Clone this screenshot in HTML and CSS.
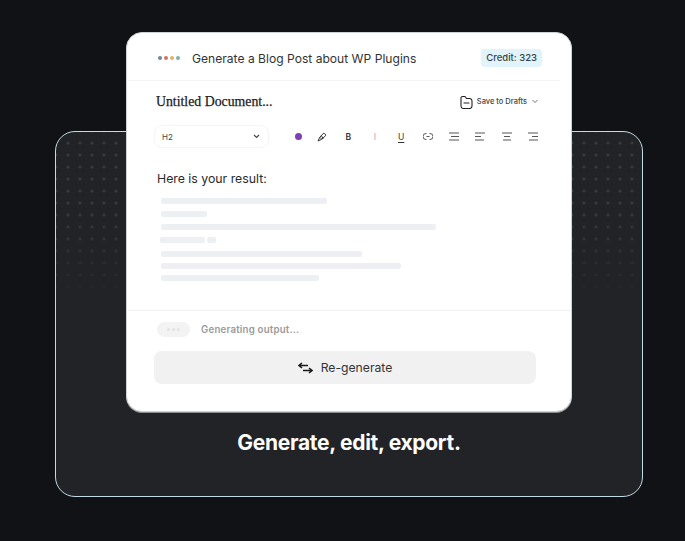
FILE: index.html
```html
<!DOCTYPE html>
<html lang="en">
<head>
<meta charset="utf-8">
<title>Generate, edit, export</title>
<link rel="stylesheet" href="styles.css">
</head>
<body>
<main class="stage">
  <section class="panel">
    <div class="dots"></div>
    <h2 class="caption">Generate, edit, export.</h2>
  </section>
  <article class="card">
    <header class="head">
      <div class="brand-dots"><i class="d1"></i><i class="d2"></i><i class="d3"></i><i class="d4"></i></div>
      <h1 class="title">Generate a Blog Post about WP Plugins</h1>
      <span class="credit">Credit: 323</span>
    </header>
    <div class="doc-row">
      <span class="doc-name">Untitled Document...</span>
      <div class="save">
        <svg class="folder" width="13" height="14" viewBox="0 0 13 14" fill="none" stroke="#222" stroke-width="1.100" stroke-linejoin="round" stroke-linecap="round"><path d="M1 3.500V3a1.500 1.500 0 0 1 1.500-1.500h2.500l1.500 2h3.500A2.500 2.500 0 0 1 12 6v5a2.500 2.500 0 0 1-2.500 2.500h-6A2.500 2.500 0 0 1 1 11z"/><path d="M4 8h5"/></svg>
        <span class="save-text">Save to Drafts</span>
        <svg width="6" height="5" viewBox="0 0 6 5" fill="none" stroke="#666" stroke-width="0.900"><path d="M.5 1L3 3.500 5.500 1"/></svg>
      </div>
    </div>
    <div class="toolbar">
      <div class="select"><span>H2</span>
        <svg width="7" height="5" viewBox="0 0 7 5" fill="none" stroke="#444" stroke-width="1.100"><path d="M1 1l2.500 2.500L6 1"/></svg>
      </div>
      <div class="tools">
        <span class="tool tool-swatch"><i class="swatch"></i></span>
        <span class="tool"><svg width="10" height="10" viewBox="0 0 10 10" fill="none" stroke="#222" stroke-width="0.900" stroke-linejoin="round"><path d="M2.800 5.200L6.800 1 9 3.200 4.800 7.200z"/><path d="M2.800 5.200L1 9l3.800-1.800M4.300 3.700l2 3"/></svg></span>
        <span class="tool tb">B</span>
        <span class="tool ti">I</span>
        <span class="tool tu">U</span>
        <span class="tool"><svg width="10" height="7" viewBox="0 0 10 7" fill="none" stroke="#444" stroke-width="0.900"><path d="M3.500 .5H3a3 3 0 0 0 0 6h.5M6.500 .5H7a3 3 0 0 1 0 6h-.5M3.500 3.500h3"/></svg></span>
        <span class="tool"><svg width="10" height="9" viewBox="0 0 10 9" stroke="#444" stroke-width="0.900"><path d="M0 1h10M2 4.500h8M0 8h10"/></svg></span>
        <span class="tool"><svg width="10" height="9" viewBox="0 0 10 9" stroke="#444" stroke-width="0.900"><path d="M0 1h10M0 4.500h6M0 8h9"/></svg></span>
        <span class="tool"><svg width="10" height="9" viewBox="0 0 10 9" stroke="#444" stroke-width="0.900"><path d="M0 1h10M2 4.500h6M1 8h8"/></svg></span>
        <span class="tool"><svg width="10" height="9" viewBox="0 0 10 9" stroke="#444" stroke-width="0.900"><path d="M0 1h10M4 4.500h6M1 8h9"/></svg></span>
      </div>
    </div>
    <div class="result">
      <p class="result-title">Here is your result:</p>
      <div class="skeleton">
        <div class="line" style="width:166px"></div>
        <div class="line" style="width:46px"></div>
        <div class="line" style="width:275px"></div>
        <div class="line-pair"><div class="line" style="width:45px"></div><div class="line" style="width:9px"></div></div>
        <div class="line gap" style="width:201px"></div>
        <div class="line tight" style="width:240px"></div>
        <div class="line tight" style="width:158px"></div>
      </div>
    </div>
    <div class="status">
      <div class="pill"><i></i><i></i><i></i></div>
      <span class="status-text">Generating output...</span>
    </div>
    <button class="regen" type="button">
      <svg width="15" height="12" viewBox="0 0 15 12" fill="none" stroke="#1a1a1a" stroke-width="1.500"><path d="M1 3.500h9M4 1L1 3.500 4 6M14 8.500H5M11 6l3 2.500L11 11"/></svg>
      <span>Re-generate</span>
    </button>
  </article>
</main>
</body>
</html>
```

FILE: styles.css
```css
* { box-sizing: border-box; }
html, body { margin: 0; height: 100%; }
body {
  background: #111216;
  font-family: Inter, "Liberation Sans", sans-serif;
  overflow: hidden;
}
.stage {
  display: grid;
  grid-template-columns: 685px;
  justify-items: center;
  align-items: start;
}
.panel, .card { grid-area: 1 / 1; }

.panel {
  position: relative;
  width: 588px;
  height: 366px;
  margin: 131px 0 0 13px;
  background: #222326;
  border: 1px solid #c2d9e6;
  border-radius: 20px;
  padding-top: 295px;
  overflow: hidden;
}
.dots {
  position: absolute;
  inset: 0 0 auto 0;
  height: 175px;
  background-image: radial-gradient(circle, #373b40 1px, transparent 2px);
  background-size: 12px 12px;
  background-position: 6px 5px;
  -webkit-mask-image: linear-gradient(#000 45%, transparent);
  mask-image: linear-gradient(#000 45%, transparent);
}
.caption {
  position: relative;
  margin: 0;
  text-align: center;
  color: #fff;
  font-size: 21px;
  font-weight: 700;
  line-height: 32px;
  letter-spacing: -0.3px;
}

.card {
  position: relative;
  width: 446px;
  height: 380px;
  margin: 32px 0 0 13px;
  background: #fff;
  border: 1px solid #cfd2d4;
  border-radius: 16px;
  box-shadow: 0 1px 0 #8d8f91;
  padding: 0 0 0 27px;
  display: flex;
  flex-direction: column;
}
.head {
  display: flex;
  align-items: center;
  height: 48px;
  margin: 0 11px 0 -26px;
  padding: 2px 18px 0 30px;
  border-bottom: 1px solid #f4f4f5;
}
.brand-dots { display: flex; gap: 2px; width: 34px; flex: none; }
.brand-dots i { width: 4px; height: 4px; flex: none; border-radius: 50%; }
.d1 { background: #6d8a9a; }
.d2 { background: #d0736c; }
.d3 { background: #e0b46a; }
.d4 { background: #7fb39d; }
.title {
  flex: 1;
  margin: 2px 0 0;
  font-size: 12.100px;
  font-weight: 400;
  color: #333;
  white-space: nowrap;
}
.credit {
  background: #e2f4fb;
  color: #33424c;
  font-size: 9.500px;
  font-weight: 500;
  line-height: 18px;
  padding: 0 5px;
  border-radius: 4px;
  white-space: nowrap;
}
.doc-row {
  display: flex;
  align-items: center;
  justify-content: space-between;
  height: 44px;
  padding: 0 33px 3px 2px;
}
.doc-name {
  font-family: "Liberation Serif", serif;
  font-size: 13.800px;
  font-weight: 400;
  -webkit-text-stroke: 0.25px #1c1c1c;
  color: #1c1c1c;
}
.save { display: flex; align-items: center; gap: 4px; }
.save-text { font-size: 7.500px; font-weight: 500; color: #444; margin-right: 1px; }
.toolbar { display: flex; align-items: center; height: 23px; }
.select {
  width: 115px;
  height: 23px;
  border: 1px solid #f5f5f6;
  border-radius: 8px;
  display: flex;
  align-items: center;
  justify-content: space-between;
  padding: 0 8px 0 7px;
  font-size: 8px;
  color: #444;
}
.tools { display: flex; margin-left: 16.800px; }
.tool {
  width: 26.400px;
  height: 23px;
  flex: none;
  display: flex;
  align-items: center;
  justify-content: center;
  font-size: 8.500px;
  font-weight: 400;
  color: #333;
}
.tool-swatch { margin-right: -3.400px; }
.swatch { width: 7px; height: 7px; border-radius: 50%; background: #7f3fb3; }
.tb { font-weight: 600; }
.ti { color: #aaa; }
.tu { text-decoration: underline; text-underline-offset: 2px; }
.result { flex: 1; padding: 22px 0 0 3px; }
.result-title {
  margin: 0;
  font-size: 12.300px;
  font-weight: 400;
  line-height: 17px;
  color: #2b2b2b;
}
.skeleton {
  margin: 11px 0 0 4px;
  display: flex;
  flex-direction: column;
  gap: 7px;
}
.line { height: 6px; border-radius: 2px; background: #eeeff2; }
.line-pair { display: flex; gap: 2px; margin-left: -1px; }
.gap { margin-top: 1px; }
.tight { margin-top: -1px; }
.status {
  display: flex;
  align-items: center;
  gap: 11px;
  height: 41px;
  margin-left: -26px;
  padding: 0 0 4px 29px;
  border-top: 1px solid #f1f1f2;
}
.pill {
  width: 33px;
  height: 15px;
  border-radius: 8px;
  background: #f3f3f4;
  display: flex;
  align-items: center;
  justify-content: center;
  gap: 2px;
}
.pill i { width: 3px; height: 3px; border-radius: 50%; background: #e2e2e4; }
.status-text { font-size: 9.700px; font-weight: 600; color: #9a9a9c; letter-spacing: 0.2px; }
.regen {
  width: 382px;
  height: 33px;
  margin: 0 0 27px 0;
  border: 0;
  border-radius: 8px;
  background: #f1f1f2;
  display: flex;
  align-items: center;
  justify-content: center;
  gap: 8px;
  font: 400 12.200px Inter, "Liberation Sans", sans-serif;
  color: #333;
}
```
